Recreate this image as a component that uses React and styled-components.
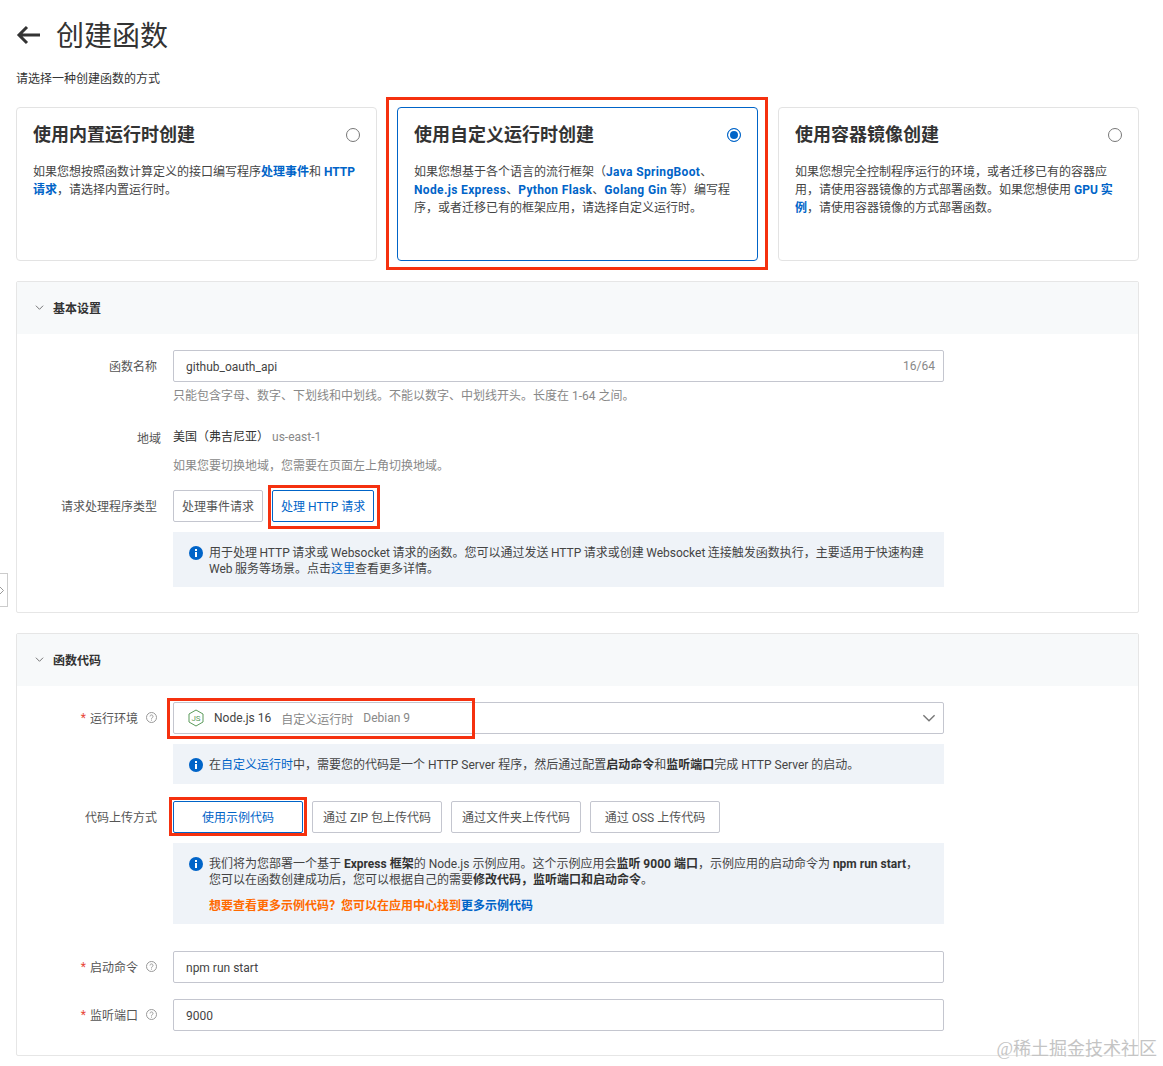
import React from "react";
import styled, { createGlobalStyle } from "styled-components";

const GlobalStyle = createGlobalStyle`
  html, body {
    margin: 0;
    background: #fff;
  }
  body {
    font-family: Roboto, "Noto Sans CJK SC", sans-serif;
    font-size: 12px;
    color: #333;
  }
  * {
    box-sizing: border-box;
  }
`;

function InfoIcon() {
  return (
    <IconSlot>
      <svg width="14" height="14" viewBox="0 0 14 14">
        <circle cx="7" cy="7" r="7" fill="#0064c8" />
        <rect x="6" y="6" width="2" height="5" fill="#fff" />
        <rect x="6" y="3" width="2" height="2" fill="#fff" />
      </svg>
    </IconSlot>
  );
}

function HelpIcon() {
  return (
    <svg width="11" height="11" viewBox="0 0 11 11" fill="none">
      <circle cx="5.5" cy="5.5" r="5" stroke="#999" />
      <path d="M4 4.4a1.5 1.5 0 1 1 2.3 1.3c-.5.3-.8.5-.8 1.1" stroke="#999" />
      <rect x="5" y="7.6" width="1" height="1" fill="#999" />
    </svg>
  );
}

function NodeIcon() {
  return (
    <svg width="16" height="18" viewBox="0 0 16 18" fill="none">
      <path d="M8 1l7 4v8l-7 4-7-4V5z" stroke="#5b9a5b" strokeWidth="1" strokeLinejoin="round" />
      <text x="8" y="12" textAnchor="middle" fontSize="8" fill="#5b9a5b" fontFamily="Roboto">
        JS
      </text>
    </svg>
  );
}

function Chevron({ size = 9, color = "#666" }) {
  return (
    <svg width={size} height={size} viewBox="0 0 10 10" fill="none">
      <path d="M1 3l4 4 4-4" stroke={color} strokeWidth="1" />
    </svg>
  );
}

function Section({ title, bottom, children }) {
  return (
    <Panel>
      <PanelHead>
        <Chevron />
        <PanelTitle>{title}</PanelTitle>
      </PanelHead>
      <PanelBody $bottom={bottom}>{children}</PanelBody>
    </Panel>
  );
}

export default function App() {
  return (
    <Page>
      <GlobalStyle />
      <TitleRow>
        <svg width="24" height="20" viewBox="0 0 24 20" fill="none">
          <path d="M24 10H3M11 2l-8 8 8 8" stroke="#333" strokeWidth="3" />
        </svg>
        <Title>创建函数</Title>
      </TitleRow>
      <Subtitle>请选择一种创建函数的方式</Subtitle>

      <Cards>
        <Card>
          <CardHead>
            <CardTitle>使用内置运行时创建</CardTitle>
            <Radio />
          </CardHead>
          <CardText>
            如果您想按照函数计算定义的接口编写程序<B>处理事件</B>和 <B>HTTP</B>
            <br />
            <B>请求</B>，请选择内置运行时。
          </CardText>
        </Card>
        <Card $active>
          <CardHead>
            <CardTitle>使用自定义运行时创建</CardTitle>
            <Radio $on />
          </CardHead>
          <CardText>
            如果您想基于各个语言的流行框架（<B $latin>Java SpringBoot</B>、
            <br />
            <B $latin>Node.js Express</B>、<B $latin>Python Flask</B>、<B $latin>Golang Gin</B> 等）编写程
            <br />
            序，或者迁移已有的框架应用，请选择自定义运行时。
          </CardText>
          <Marker $t={-11} $r={-11} $b={-10} $l={-12} />
        </Card>
        <Card>
          <CardHead>
            <CardTitle>使用容器镜像创建</CardTitle>
            <Radio />
          </CardHead>
          <CardText>
            如果您想完全控制程序运行的环境，或者迁移已有的容器应
            <br />
            用，请使用容器镜像的方式部署函数。如果您想使用 <B>GPU 实</B>
            <br />
            <B>例</B>，请使用容器镜像的方式部署函数。
          </CardText>
        </Card>
      </Cards>

      <Section title="基本设置" bottom={25}>
        <Row>
          <Label>函数名称</Label>
          <Control>
            <Field>
              <FieldInput readOnly value="github_oauth_api" />
              <Counter>16/64</Counter>
            </Field>
            <Hint>只能包含字母、数字、下划线和中划线。不能以数字、中划线开头。长度在 1-64 之间。</Hint>
          </Control>
        </Row>
        <Row $top={23}>
          <Label $shift={4}>地域</Label>
          <Control>
            <Region>
              美国（弗吉尼亚）<RegionCode>us-east-1</RegionCode>
            </Region>
            <Hint $top={11}>如果您要切换地域，您需要在页面左上角切换地域。</Hint>
          </Control>
        </Row>
        <Row $top={15}>
          <Label>请求处理程序类型</Label>
          <Control>
            <ButtonRow>
              <Choice>处理事件请求</Choice>
              <Choice $active>
                处理 HTTP 请求
                <Marker $t={-6} $r={-7} $b={-8} $l={-5} />
              </Choice>
            </ButtonRow>
            <Notice $pad="13px 12px 10px 16px">
              <InfoIcon />
              <NoticeText $tight>
                用于处理 HTTP 请求或 Websocket 请求的函数。您可以通过发送 HTTP 请求或创建 Websocket 连接触发函数执行，主要适用于快速构建
                <br />
                Web 服务等场景。点击<A>这里</A>查看更多详情。
              </NoticeText>
            </Notice>
          </Control>
        </Row>
      </Section>

      <Section title="函数代码" bottom={24}>
        <Row>
          <Label>
            <Star>*</Star>运行环境<HelpSlot><HelpIcon /></HelpSlot>
          </Label>
          <Control>
            <SelectBox>
              <NodeIcon />
              <SelectName>Node.js 16</SelectName>
              <SelectMuted>自定义运行时</SelectMuted>
              <SelectMuted>Debian 9</SelectMuted>
              <SelectArrow><Chevron size={14} color="#777" /></SelectArrow>
              <Marker $t={-5} $r={468} $b={-6} $l={-7} />
            </SelectBox>
            <Notice $pad="13px 12px 11px 16px">
              <InfoIcon />
              <NoticeText>
                在<A>自定义运行时</A>中，需要您的代码是一个 HTTP Server 程序，然后通过配置<strong>启动命令</strong>和<strong>监听端口</strong>完成 HTTP Server 的启动。
              </NoticeText>
            </Notice>
          </Control>
        </Row>
        <Row $top={17}>
          <Label>代码上传方式</Label>
          <Control>
            <ButtonRow>
              <Choice $wide $active>
                使用示例代码
                <Marker $t={-5} $r={-5} $b={-4} $l={-5} />
              </Choice>
              <Choice $wide>通过 ZIP 包上传代码</Choice>
              <Choice $wide>通过文件夹上传代码</Choice>
              <Choice $wide>通过 OSS 上传代码</Choice>
            </ButtonRow>
            <Notice $pad="13px 12px 10px 16px">
              <InfoIcon />
              <NoticeText>
                我们将为您部署一个基于 <strong>Express 框架</strong>的 Node.js 示例应用。这个示例应用会<strong>监听 9000 端口</strong>，示例应用的启动命令为 <strong>npm run start</strong>，
                <br />
                您可以在函数创建成功后，您可以根据自己的需要<strong>修改代码，监听端口和启动命令</strong>。
                <MoreLine>
                  想要查看更多示例代码？您可以在应用中心找到<B>更多示例代码</B>
                </MoreLine>
              </NoticeText>
            </Notice>
          </Control>
        </Row>
        <Row $top={27}>
          <Label>
            <Star>*</Star>启动命令<HelpSlot><HelpIcon /></HelpSlot>
          </Label>
          <Control>
            <Field>
              <FieldInput readOnly value="npm run start" />
            </Field>
          </Control>
        </Row>
        <Row $top={16}>
          <Label>
            <Star>*</Star>监听端口<HelpSlot><HelpIcon /></HelpSlot>
          </Label>
          <Control>
            <Field>
              <FieldInput readOnly value="9000" />
            </Field>
          </Control>
        </Row>
      </Section>

      <SideHandle>
        <svg width="5" height="9" viewBox="0 0 5 9" fill="none">
          <path d="M0 1l3.5 3.5L0 8" stroke="#999" />
        </svg>
      </SideHandle>
      <Watermark>@稀土掘金技术社区</Watermark>
    </Page>
  );
}

const Page = styled.div`
  position: relative;
  width: 1163px;
  height: 1066px;
  padding: 10px 24px 0 16px;
  overflow: hidden;
`;
const TitleRow = styled.div`
  display: flex;
  align-items: center;
  gap: 16px;
  height: 50px;
`;
const Title = styled.h1`
  margin: 0;
  padding-top: 3px;
  font-size: 28px;
  font-weight: 400;
  line-height: 50px;
`;
const Subtitle = styled.p`
  margin: 10px 0 0;
  line-height: 18px;
`;
const Cards = styled.div`
  display: grid;
  grid-template-columns: repeat(3, 361px);
  gap: 20px;
  margin-top: 19px;
`;
const Card = styled.div`
  position: relative;
  height: 154px;
  padding: 12px 16px;
  background: #fff;
  border: 1px solid ${(p) => (p.$active ? "#0064c8" : "#e3e3e3")};
  border-radius: 4px;
`;
const CardHead = styled.div`
  display: flex;
  align-items: center;
  justify-content: space-between;
  height: 28px;
`;
const CardTitle = styled.h3`
  margin: 2px 0 0;
  font-size: 18px;
  font-weight: 700;
  line-height: 28px;
`;
const Radio = styled.span`
  width: 14px;
  height: 14px;
  margin-top: 2px;
  border-radius: 50%;
  border: 1px solid ${(p) => (p.$on ? "#0064c8" : "#777")};
  background: ${(p) => (p.$on ? "#0064c8" : "#fff")};
  box-shadow: ${(p) => (p.$on ? "inset 0 0 0 2px #fff" : "none")};
`;
const CardText = styled.p`
  margin: 15px 0 0;
  line-height: 18px;
  color: #444;
`;
const B = styled.span`
  color: #0064c8;
  font-weight: 700;
  letter-spacing: ${(p) => (p.$latin ? "0.35px" : "0")};
`;
const A = styled.span`
  color: #0064c8;
`;
const Panel = styled.section`
  margin-top: 20px;
  border: 1px solid #e6e6e6;
  border-radius: 2px;
`;
const PanelHead = styled.div`
  display: flex;
  align-items: center;
  gap: 9px;
  height: 52px;
  padding: 0 0 2px 18px;
  background: #f7f9fa;
`;
const PanelTitle = styled.h4`
  margin: 0;
  font-size: 12px;
  font-weight: 700;
`;
const PanelBody = styled.div`
  padding: 16px 0 ${(p) => p.$bottom}px;
`;
const Row = styled.div`
  display: grid;
  grid-template-columns: 140px 771px;
  column-gap: 16px;
  margin-top: ${(p) => p.$top || 0}px;
`;
const Label = styled.div`
  display: flex;
  justify-content: flex-end;
  align-items: center;
  align-self: start;
  height: ${(p) => (p.$shift ? "18px" : "31px")};
  margin-right: ${(p) => (p.$shift ? -p.$shift : 0)}px;
  color: #555;
`;
const Star = styled.span`
  margin-right: 4px;
  color: #e84738;
`;
const HelpSlot = styled.span`
  display: flex;
  margin-left: 8px;
`;
const Control = styled.div`
  min-width: 0;
`;
const Field = styled.div`
  display: flex;
  align-items: center;
  height: 32px;
  padding: 0 8px 0 12px;
  border: 1px solid #c4c6cf;
  border-radius: 2px;
`;
const FieldInput = styled.input`
  flex: 1;
  min-width: 0;
  padding: 2px 0 0;
  border: none;
  outline: none;
  background: transparent;
  font: inherit;
  color: #444;
`;
const Counter = styled.span`
  color: #888;
`;
const Hint = styled.p`
  margin: ${(p) => p.$top || 5}px 0 0;
  line-height: 18px;
  color: #888;
`;
const Region = styled.div`
  line-height: 18px;
  color: #333;
`;
const RegionCode = styled.span`
  margin-left: 3px;
  color: #888;
`;
const ButtonRow = styled.div`
  display: flex;
  gap: 9px;
`;
const Choice = styled.button`
  position: relative;
  width: ${(p) => (p.$wide ? "130px" : "auto")};
  height: 32px;
  padding: 0 8px 2px;
  background: #fff;
  border: 1px solid ${(p) => (p.$active ? "#0064c8" : "#c4c6cf")};
  border-radius: 2px;
  font: inherit;
  color: ${(p) => (p.$active ? "#0064c8" : "#555")};
`;
const Notice = styled.div`
  display: flex;
  gap: 6px;
  margin-top: 10px;
  padding: ${(p) => p.$pad};
  background: #eff3f8;
  line-height: 16px;
`;
const IconSlot = styled.span`
  flex: none;
  display: flex;
  height: 16px;
  align-items: center;
`;
const NoticeText = styled.div`
  flex: 1;
  color: #444;
  word-spacing: ${(p) => (p.$tight ? "-0.5px" : "0")};
  strong {
    color: #333;
    font-weight: 700;
  }
`;
const MoreLine = styled.div`
  margin-top: 10px;
  font-weight: 700;
  color: #ff6a00;
`;
const SelectBox = styled.div`
  position: relative;
  display: flex;
  align-items: center;
  height: 32px;
  padding-left: 14px;
  border: 1px solid #c4c6cf;
  border-radius: 2px;
`;
const SelectName = styled.span`
  margin-left: 10px;
  color: #444;
`;
const SelectMuted = styled.span`
  margin-left: 10px;
  color: #888;
`;
const SelectArrow = styled.span`
  display: flex;
  margin-left: auto;
  margin-right: 7px;
`;
const Marker = styled.span`
  position: absolute;
  top: ${(p) => p.$t}px;
  right: ${(p) => p.$r}px;
  bottom: ${(p) => p.$b}px;
  left: ${(p) => p.$l}px;
  border: 3px solid #f5310f;
  pointer-events: none;
`;
const SideHandle = styled.div`
  position: absolute;
  left: 0;
  top: 573px;
  display: flex;
  align-items: center;
  width: 8px;
  height: 34px;
  background: #fff;
  border: 1px solid #ccc;
  border-left: none;
`;
const Watermark = styled.div`
  position: absolute;
  right: 6px;
  top: 1037px;
  font-family: "Liberation Serif", "Noto Sans CJK SC", serif;
  font-size: 18px;
  line-height: 24px;
  color: #c4c4c4;
`;
